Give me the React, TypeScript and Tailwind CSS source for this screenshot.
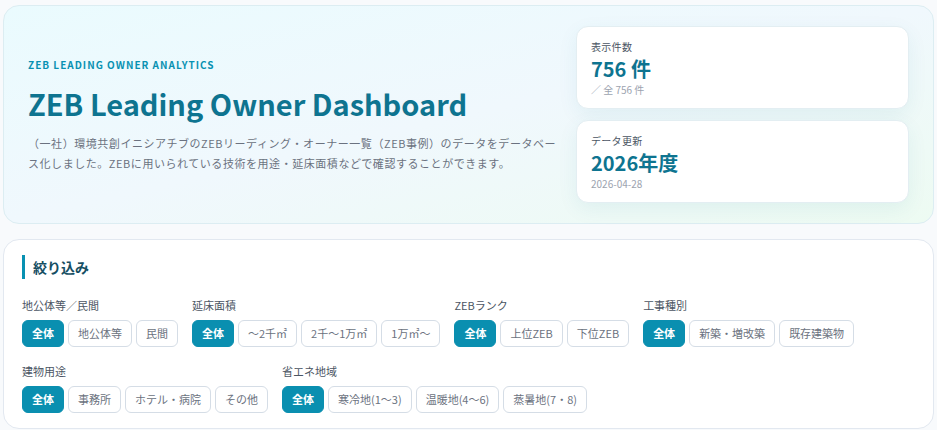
import React, { useState } from 'react';

type Group = { label: string; options: string[] };

const groups: Group[] = [
  { label: '地公体等／民間', options: ['全体', '地公体等', '民間'] },
  { label: '延床面積', options: ['全体', '〜2千㎡', '2千〜1万㎡', '1万㎡〜'] },
  { label: 'ZEBランク', options: ['全体', '上位ZEB', '下位ZEB'] },
  { label: '工事種別', options: ['全体', '新築・増改築', '既存建築物'] },
  { label: '建物用途', options: ['全体', '事務所', 'ホテル・病院', 'その他'] },
  { label: '省エネ地域', options: ['全体', '寒冷地(1〜3)', '温暖地(4〜6)', '蒸暑地(7・8)'] },
];

function StatCard({ label, value, sub }: { label: string; value: string; sub: string }) {
  return (
    <div className="rounded-xl border border-[#e3eef2] bg-white px-[14px] pt-3 pb-[11px] shadow-[0_6px_20px_rgba(14,116,144,0.07)]">
      <div className="text-[10px] leading-4 tracking-[0.03em] text-[#4b5563]">{label}</div>
      <div className="mt-[2px] text-[20px] font-bold leading-[24px] text-[#0e7490]">{value}</div>
      <div className="mt-[2px] text-[10px] leading-[14px] text-[#9ca3af]">{sub}</div>
    </div>
  );
}

function FilterGroup({ group, value, onChange }: { group: Group; value: string; onChange: (v: string) => void }) {
  return (
    <div>
      <div className="text-[11px] leading-4 text-[#4b5563]">{group.label}</div>
      <div className="mt-[7px] flex gap-1">
        {group.options.map((opt) => {
          const active = opt === value;
          return (
            <button
              key={opt}
              type="button"
              onClick={() => onChange(opt)}
              className={
                active
                  ? 'flex h-[27px] items-center rounded-md border border-[#0a8fb0] bg-[#0a8fb0] px-[9px] text-[11px] font-bold text-white'
                  : 'flex h-[27px] items-center rounded-md border border-[#d5dde6] bg-white px-[9px] text-[11px] text-[#6b7280]'
              }
            >
              {opt}
            </button>
          );
        })}
      </div>
    </div>
  );
}

export default function App() {
  const [selected, setSelected] = useState<Record<string, string>>(
    Object.fromEntries(groups.map((g) => [g.label, '全体']))
  );

  return (
    <div className="min-h-screen w-[937px] bg-[#f8fafc] px-[3px] pt-[5px] pb-4 font-['Noto_Sans_CJK_JP','Noto_Sans',sans-serif]">
      <section className="flex gap-[18px] rounded-2xl border border-[#dcedf2] bg-linear-to-br from-[#eafbfe] via-[#f0f8fd] to-[#edfbf2] px-6 py-[20px]">
        <div className="flex min-w-0 flex-1 flex-col justify-center">
          <div className="text-[10px] font-bold leading-4 tracking-[0.1em] text-[#0891b2]">
            ZEB LEADING OWNER ANALYTICS
          </div>
          <h1 className="mt-[10px] text-[29px] font-bold leading-[40px] text-[#0e7490]">
            ZEB Leading Owner Dashboard
          </h1>
          <p className="mt-[10px] text-[11px] leading-[20px] tracking-[0.05em] text-[#6b7280]">
            （一社）環境共創イニシアチブのZEBリーディング・オーナー一覧（ZEB事例）のデータをデータベース化しました。ZEBに用いられている技術を用途・延床面積などで確認することができます。
          </p>
        </div>
        <div className="flex w-[333px] shrink-0 flex-col gap-[11px]">
          <StatCard label="表示件数" value="756 件" sub="／ 全 756 件" />
          <StatCard label="データ更新" value="2026年度" sub="2026-04-28" />
        </div>
      </section>

      <section className="mt-[15px] rounded-2xl border border-[#e2e8f0] bg-white px-[18px] pt-[15px] pb-[15px]">
        <h2 className="border-l-[3px] border-[#0891b2] pl-2 text-[14px] font-bold leading-6 text-[#164e63]">
          絞り込み
        </h2>
        <div className="mt-[18px] flex flex-wrap gap-x-[14px] gap-y-4">
          {groups.map((g) => (
            <FilterGroup
              key={g.label}
              group={g}
              value={selected[g.label]}
              onChange={(v) => setSelected({ ...selected, [g.label]: v })}
            />
          ))}
        </div>
      </section>
    </div>
  );
}
